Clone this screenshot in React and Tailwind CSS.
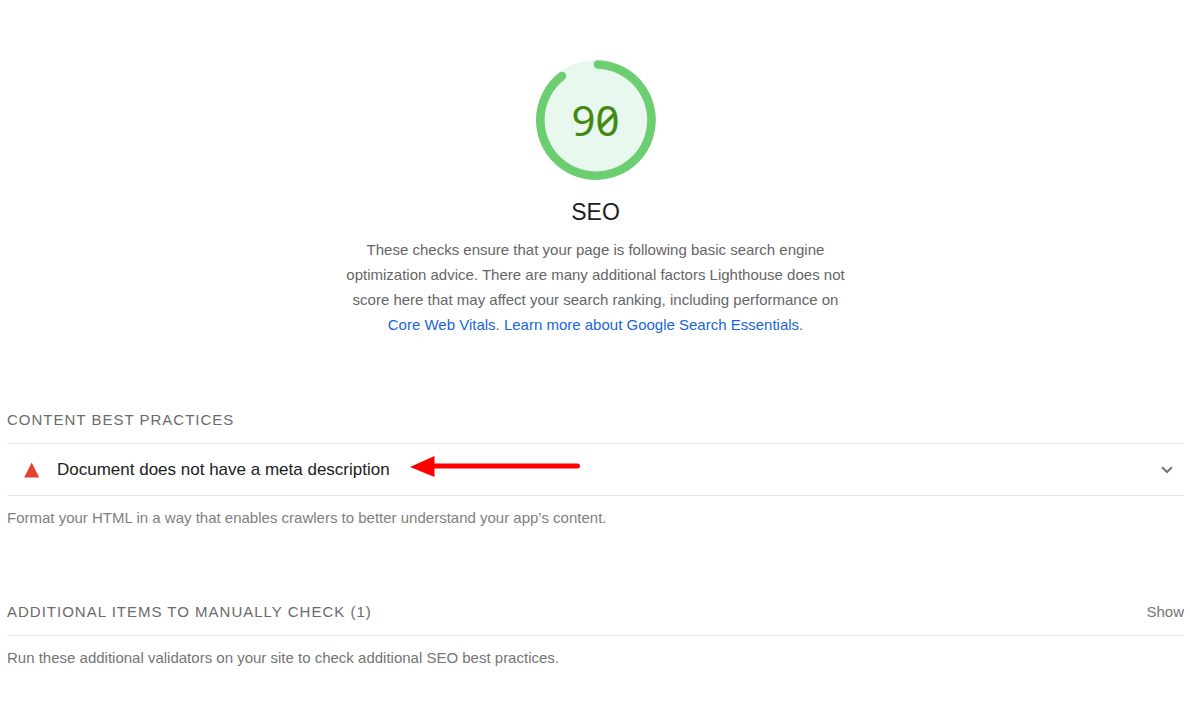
import React, { useState } from 'react';

const Gauge = ({ score }) => (
    <div className="relative flex h-30 w-30 items-center justify-center">
        <svg viewBox="0 0 120 120" className="absolute inset-0 h-full w-full" aria-hidden="true">
            <circle cx="60" cy="60" r="60" fill="#e8f8ee" />
            <path
                d="M62 4.5 A55.6 55.6 0 1 1 26 16"
                fill="none"
                stroke="#6bce6f"
                strokeWidth="8.6"
                strokeLinecap="round"
            />
        </svg>
        <span className="relative font-['Noto_Sans',sans-serif] text-[42px] leading-none text-[#428a12] slashed-zero tabular-nums">
            {score}
        </span>
    </div>
);

const Arrow = () => (
    <svg viewBox="0 0 172 22" className="h-[22px] w-[172px]" aria-hidden="true">
        <path d="M22 10 H167.500" stroke="#fe0000" strokeWidth="5" strokeLinecap="round" />
        <path d="M0 11 L24.500 0 V21 Z" fill="#fe0000" />
    </svg>
);

const Audit = ({ title }) => {
    const [open, setOpen] = useState(false);

    return (
        <button
            type="button"
            aria-expanded={open}
            onClick={() => setOpen(!open)}
            className="flex h-[53px] w-full items-center border-y border-[#e6e6e6] pr-[11px] pl-[17px] text-left"
        >
            <svg viewBox="0 0 16 16" className="h-4 w-4 shrink-0" aria-hidden="true">
                <path d="M7.700 0.500 L15.200 15.500 H0.200 Z" fill="#e34133" />
            </svg>
            <span className="relative ml-[17px] text-[17px] text-[#212121]">
                {title}
                <span className="absolute -top-px left-full ml-5">
                    <Arrow />
                </span>
            </span>
            <svg viewBox="0 0 12 8" className="ml-auto h-2 w-3 shrink-0" aria-hidden="true">
                <path d="M1 1.200 L6 6 L11 1.200" fill="none" stroke="#757575" strokeWidth="2" />
            </svg>
        </button>
    );
};

const App = () => {
    const [showManual, setShowManual] = useState(false);

    return (
        <main className="bg-white pt-15 pr-1.5 pb-11 pl-[7px] font-['Liberation_Sans',Arial,sans-serif]">
            <header className="flex flex-col items-center text-center">
                <Gauge score={90} />
                <h1 className="mt-4 text-[23px] leading-8 text-[#212121]">SEO</h1>
                <p className="mt-[9px] max-w-[510px] text-[15px] leading-[25px] text-[#666666]">
                    These checks ensure that your page is following basic search engine optimization advice. There are
                    many additional factors Lighthouse does not score here that may affect your search ranking,
                    including performance on{' '}
                    <a href="#vitals" className="text-[#1a66d6]">Core Web Vitals</a>.{' '}
                    <a href="#essentials" className="text-[#1a66d6]">Learn more about Google Search Essentials</a>.
                </p>
            </header>

            <section className="mt-[71px]">
                <h2 className="mb-[11px] text-[15px] leading-6 tracking-[1px] text-[#6b6b6b] uppercase">
                    Content Best Practices
                </h2>
                <Audit title="Document does not have a meta description" />
                <p className="mt-[10px] text-[15px] leading-6 text-[#808080]">
                    Format your HTML in a way that enables crawlers to better understand your app’s content.
                </p>
            </section>

            <section className="mt-[70px]">
                <div className="flex items-center justify-between border-b border-[#e6e6e6] pb-[11px] leading-6">
                    <h2 className="text-[15px] tracking-[1px] text-[#6b6b6b] uppercase">
                        Additional items to manually check (1)
                    </h2>
                    <button
                        type="button"
                        onClick={() => setShowManual(!showManual)}
                        className="text-[15px] text-[#757575]"
                    >
                        {showManual ? 'Hide' : 'Show'}
                    </button>
                </div>
                <p className="mt-[10px] text-[15px] leading-6 text-[#757575]">
                    Run these additional validators on your site to check additional SEO best practices.
                </p>
            </section>
        </main>
    );
};

export default App;
